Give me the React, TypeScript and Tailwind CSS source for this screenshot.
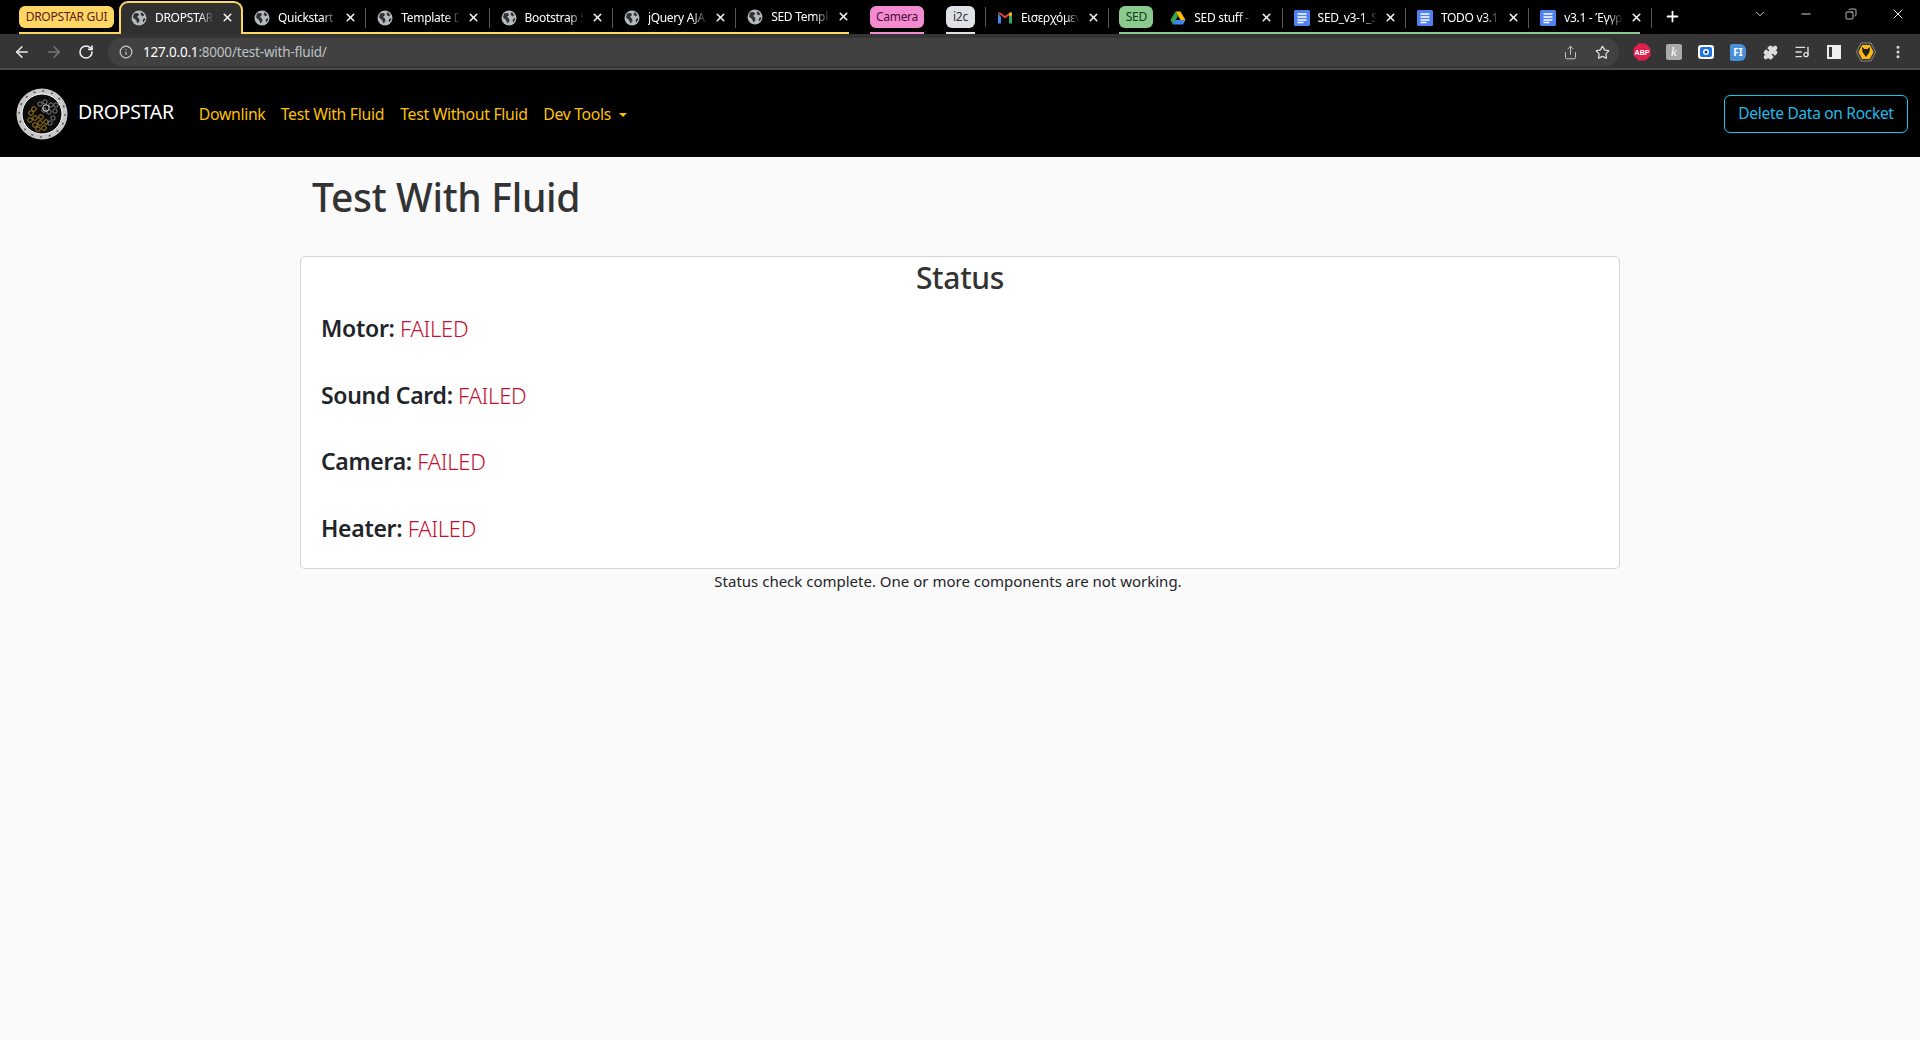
import React from "react";
import { ArrowLeft, ArrowRight, RotateCw, Info, Star, Puzzle, ListMusic, MoreVertical, Share, X, Plus, ChevronDown, Minus, Copy } from "lucide-react";

const sans = "font-['Noto_Sans','Open_Sans',sans-serif]";

function Globe() {
  return (
    <svg width="16" height="16" viewBox="0 0 16 16" className="shrink-0">
      <circle cx="8" cy="8" r="7.5" fill="#b5b8bc" />
      <path d="M3 3.5 7 3l1 2-2 2 2 1.5.5 2.5-2 2.5L5 10 2 7.5zM10.5 2l3 3-2 1.5-2-2zM13 8l1.5 1-2 3.5-1-2z" fill="#303134" />
    </svg>
  );
}

function Gmail() {
  return (
    <svg width="16" height="16" viewBox="0 0 16 16" className="shrink-0">
      <path d="M1 3v10.5h3V7z" fill="#4285f4" />
      <path d="M12 7v6.500h3V3z" fill="#34a853" />
      <path d="M1 3l7 5.500L15 3l-1.500-1L8 6 2.500 2z" fill="#ea4335" />
      <path d="M12 4.500V7l3-2.200V3l-1.500-1z" fill="#fbbc04" />
    </svg>
  );
}

function Drive() {
  return (
    <svg width="16" height="16" viewBox="0 0 16 16" className="shrink-0">
      <path d="M5.500 1.500h5L15.500 10h-5z" fill="#fbbc04" />
      <path d="M5.500 1.500 0.500 10 3 14.500 8 6z" fill="#34a853" />
      <path d="M5.500 10h10L13 14.500H3z" fill="#4285f4" />
    </svg>
  );
}

function Doc() {
  return (
    <svg width="16" height="16" viewBox="0 0 16 16" className="shrink-0">
      <rect x="0" y="0" width="16" height="16" rx="1.500" fill="#4f81f0" />
      <path d="M3.500 4h9M3.500 7h9M3.500 10h9M3.500 12.500h6" stroke="#fff" strokeWidth="1.400" />
    </svg>
  );
}

function Tab({ title, icon, active, noSep }: { title: string; icon: React.ReactNode; active?: boolean; noSep?: boolean }) {
  return (
    <div
      className={
        active
          ? "relative z-10 flex h-[33px] w-[124px] shrink-0 items-center self-end rounded-t-[9px] border-2 border-b-0 border-[#fdd663] bg-[#303030] pb-[2px] pl-[10px]"
          : "relative flex h-[33px] w-[123.300px] shrink-0 items-center self-end pl-[11px]"
      }
    >
      {icon}
      <span className="ml-2 w-[59px] overflow-hidden whitespace-nowrap text-[12px] text-white tracking-[-0.3px] [mask-image:linear-gradient(to_right,black_75%,transparent)]">
        {title}
      </span>
      <X size={13} strokeWidth={3} className="ml-[7px] text-[#eee]" />
      {!active && !noSep && <span className="absolute right-0 top-[7px] h-[20px] w-px bg-[#555]" />}
    </div>
  );
}

function Chip({ label, className, width }: { label: string; className: string; width: string }) {
  return (
    <div className={`flex h-[22px] items-center justify-center self-start mt-[6px] rounded-[6px] text-[12px] tracking-[-0.3px] shrink-0 ${width} ${className}`}>
      {label}
    </div>
  );
}

function TabStrip() {
  return (
    <div className="flex h-[34px] items-stretch bg-black pl-[19px]">
      <div className="relative flex w-[830px] shrink-0">
        <Chip label="DROPSTAR GUI" width="w-[95px]" className="bg-[#fdd663] text-[#5f1a1a]" />
        <div className="ml-[5px]" />
        <Tab active title="DROPSTAR" icon={<Globe />} />
        <Tab title="Quickstart -" icon={<Globe />} />
        <Tab title="Template D" icon={<Globe />} />
        <Tab title="Bootstrap 5" icon={<Globe />} />
        <Tab title="jQuery AJAX" icon={<Globe />} />
        <div className="w-[100px] shrink-0">
          <Tab title="SED Templa" icon={<Globe />} noSep />
        </div>
        <span className="absolute bottom-0 left-0 h-[2px] w-[100px] bg-[#fdd663]" />
        <span className="absolute bottom-0 left-[223px] h-[2px] w-[607px] bg-[#fdd663]" />
      </div>
      <div className="relative ml-[21px] flex w-[54px] shrink-0">
        <Chip label="Camera" width="w-[54px]" className="bg-[#f48ad0] text-[#4a1040]" />
        <span className="absolute bottom-0 left-0 h-[2px] w-full bg-[#f48ad0]" />
      </div>
      <div className="relative ml-[22px] flex w-[29px] shrink-0">
        <Chip label="i2c" width="w-[29px]" className="bg-[#dee1e6] text-[#303134]" />
        <span className="absolute bottom-0 left-0 h-[2px] w-full bg-[#dee1e6]" />
      </div>
      <div className="ml-[10px] flex">
        <span className="mt-[7px] h-[20px] w-px bg-[#555]" />
        <Tab title="Εισερχόμενα" icon={<Gmail />} />
      </div>
      <div className="relative ml-[10px] flex w-[521px] shrink-0">
        <Chip label="SED" width="w-[34px]" className="bg-[#8ccb8f] text-[#123d18]" />
        <div className="ml-[6px] flex">
          <Tab title="SED stuff -" icon={<Drive />} />
          <Tab title="SED_v3-1_S" icon={<Doc />} />
          <Tab title="TODO v3.1" icon={<Doc />} />
          <Tab title="v3.1 - Έγγρ" icon={<Doc />} />
        </div>
        <span className="absolute bottom-0 left-0 h-[2px] w-full bg-[#8ccb8f]" />
      </div>
      <Plus size={17} strokeWidth={2.500} className="ml-[24px] mt-[8px] text-white" />
      <div className="ml-auto flex items-start pt-[6px] pr-[14px] text-[#f2f2f2]">
        <ChevronDown size={14} strokeWidth={1.500} className="mr-[32px] mt-[1px]" />
        <Minus size={14} strokeWidth={1.500} className="mr-[32px] mt-[1px]" />
        <Copy size={12} strokeWidth={1.500} className="mr-[33px] mt-[2px] -scale-x-100" />
        <X size={16} strokeWidth={1.500} />
      </div>
    </div>
  );
}

function ToolIcon({ children, w }: { children: React.ReactNode; w: string }) {
  return <div className={`flex items-center justify-center shrink-0 ${w}`}>{children}</div>;
}

function Toolbar() {
  return (
    <div className="flex h-[36px] items-center border-b-2 border-[#4a4a4a] bg-[#353535] pt-[2px]">
      <ToolIcon w="ml-[6px] w-[32px]"><ArrowLeft size={18} className="text-[#eee]" /></ToolIcon>
      <ToolIcon w="w-[32px]"><ArrowRight size={18} className="text-[#777]" /></ToolIcon>
      <ToolIcon w="w-[32px]"><RotateCw size={16} strokeWidth={2.400} className="text-[#eee]" /></ToolIcon>
      <div className="ml-[6px] flex h-[28px] w-[1511px] shrink-0 items-center rounded-full bg-[#414141] pl-[11px] pr-[9px]">
        <Info size={14} className="text-[#ccc]" />
        <span className="ml-[10px] text-[13.500px] tracking-[-0.2px] text-[#bdc1c6]">
          <span className="text-white">127.0.0.1</span>:8000/test-with-fluid/
        </span>
        <Share size={15} strokeWidth={1.500} className="ml-auto mr-[1px] text-[#ccc]" />
        <Star size={15} strokeWidth={2} className="ml-[16px] text-[#ddd]" />
      </div>
      <ToolIcon w="ml-[7px] w-[32px]">
        <svg width="18" height="18" viewBox="0 0 18 18">
          <polygon points="5.500,0.500 12.500,0.500 17.500,5.500 17.500,12.500 12.500,17.500 5.500,17.500 0.500,12.500 0.500,5.500" fill="#e01f4d" />
          <text x="9" y="11.500" textAnchor="middle" fontSize="7" fontWeight="700" fill="#fff" fontFamily="Liberation Sans">ABP</text>
        </svg>
      </ToolIcon>
      <ToolIcon w="w-[32px]">
        <div className="flex h-[16px] w-[16px] items-center justify-center rounded-[2px] bg-[#aaa] font-['Liberation_Serif',serif] text-[13px] italic text-white">k</div>
      </ToolIcon>
      <ToolIcon w="w-[32px]">
        <svg width="16" height="16" viewBox="0 0 16 16">
          <rect x="0" y="1" width="16" height="14" rx="3" fill="#fff" />
          <rect x="2" y="3" width="12" height="10" rx="2" fill="#1a73e8" />
          <circle cx="8" cy="8" r="3" fill="#fff" />
          <circle cx="8" cy="8" r="1.500" fill="#1a3a8e" />
        </svg>
      </ToolIcon>
      <ToolIcon w="w-[32px]">
        <div className="flex h-[17px] w-[16px] items-center justify-center rounded-l-[2px] rounded-r-[6px] bg-[#4a90d9] text-[10px] font-bold text-white">FI</div>
      </ToolIcon>
      <ToolIcon w="w-[32px]"><Puzzle size={15} fill="#ddd" className="text-[#ddd]" /></ToolIcon>
      <ToolIcon w="w-[32px]"><ListMusic size={16} className="text-[#ddd]" /></ToolIcon>
      <ToolIcon w="w-[32px]">
        <div className="flex h-[14px] w-[14px] justify-end border-2 border-[#eee]"><div className="h-full w-[7px] bg-[#eee]" /></div>
      </ToolIcon>
      <ToolIcon w="w-[32px]">
        <svg width="20" height="20" viewBox="0 0 20 20">
          <polygon points="5,1 15,1 19.500,10 15,19 5,19 0.500,10" fill="#333" stroke="#888" />
          <polygon points="6,3 14,3 17.500,10 14,17 6,17 2.500,10" fill="#fdb913" />
          <path d="M6 5l2.500 2h3L14 5l-.5 5L10 15 6.500 10z" fill="#231f20" />
        </svg>
      </ToolIcon>
      <ToolIcon w="w-[32px]"><MoreVertical size={16} strokeWidth={2.500} className="text-[#ddd]" /></ToolIcon>
    </div>
  );
}

function Logo() {
  const gold = [[15, 26], [19, 31], [14, 33], [19, 38], [24, 36], [22, 42], [28, 41], [18, 22], [25, 30], [30, 35]];
  const gray = [[24, 17], [29, 15], [35, 18], [33, 25], [39, 24], [37, 31], [28, 23], [34, 36], [40, 18]];
  return (
    <svg width="52" height="54" viewBox="0 0 52 54" className="shrink-0">
      <circle cx="26" cy="27" r="25.500" fill="#c8c8c8" />
      <circle cx="26" cy="27" r="20" fill="#0c0c0c" stroke="#fff" strokeWidth="1" />
      <circle cx="26" cy="27" r="23" fill="none" stroke="#555" strokeWidth="1.500" strokeDasharray="2 7" />
      {gold.map(([x, y]) => (
        <circle key={`${x}-${y}`} cx={x} cy={y} r="2.300" fill="none" stroke="#a57f1f" strokeWidth="1" />
      ))}
      {gray.map(([x, y]) => (
        <circle key={`${x}-${y}`} cx={x} cy={y} r="2.200" fill="none" stroke="#999" strokeWidth="0.800" />
      ))}
      <circle cx="30" cy="21" r="3.200" fill="none" stroke="#ddd" strokeWidth="1" />
    </svg>
  );
}

function Navbar() {
  return (
    <nav className="flex h-[87px] items-center bg-black pl-[16px] pr-[12px]">
      <Logo />
      <span className="ml-[10px] text-[19.500px] tracking-[-0.3px] text-white -mt-[3px]">DROPSTAR</span>
      <div className="ml-[25px] flex items-center text-[15.750px] tracking-[-0.3px] text-[#ffc107] mt-[3px]">
        <a className="w-[82px]">Downlink</a>
        <a className="w-[119.500px]">Test With Fluid</a>
        <a className="w-[143px]">Test Without Fluid</a>
        <a>Dev Tools</a>
        <span className="ml-[8px] h-0 w-0 border-x-[4px] border-t-[4px] border-x-transparent border-t-[#ffc107]" />
      </div>
      <button className="ml-auto h-[38px] w-[184px] rounded-[6px] border border-[#0dcaf0] pt-[1px] text-[15.500px] tracking-[-0.3px] text-[#22b8e6]">
        Delete Data on Rocket
      </button>
    </nav>
  );
}

function StatusRow({ label }: { label: string }) {
  return (
    <div className="mb-[37.500px] text-[22px] leading-[29px] tracking-[-0.3px] text-[#212529] last:mb-0">
      <span className="text-[23px] font-semibold">{label}:</span> <span className="font-light text-[#c4102f]">FAILED</span>
    </div>
  );
}

export default function App() {
  return (
    <div className={`min-h-[1040px] bg-[#fafafa] ${sans}`}>
      <TabStrip />
      <Toolbar />
      <Navbar />
      <main className="mx-auto w-[1320px]">
        <h1 className="px-3 pt-4 text-[39px] leading-[47px] font-medium tracking-[-0.3px] text-[#333]">Test With Fluid</h1>
        <div className="mt-[36px] h-[313px] rounded-[5px] border border-[#d4d4d4] bg-white px-[20px] pt-[2px]">
          <h2 className="text-center text-[30px] leading-[38px] font-medium tracking-[-0.3px] text-[#333]">Status</h2>
          <div className="mt-[17px]">
            <StatusRow label="Motor" />
            <StatusRow label="Sound Card" />
            <StatusRow label="Camera" />
            <StatusRow label="Heater" />
          </div>
        </div>
        <p className="pr-[24px] text-center text-[15px] leading-[24px] text-[#212529]">
          Status check complete. One or more components are not working.
        </p>
      </main>
    </div>
  );
}
